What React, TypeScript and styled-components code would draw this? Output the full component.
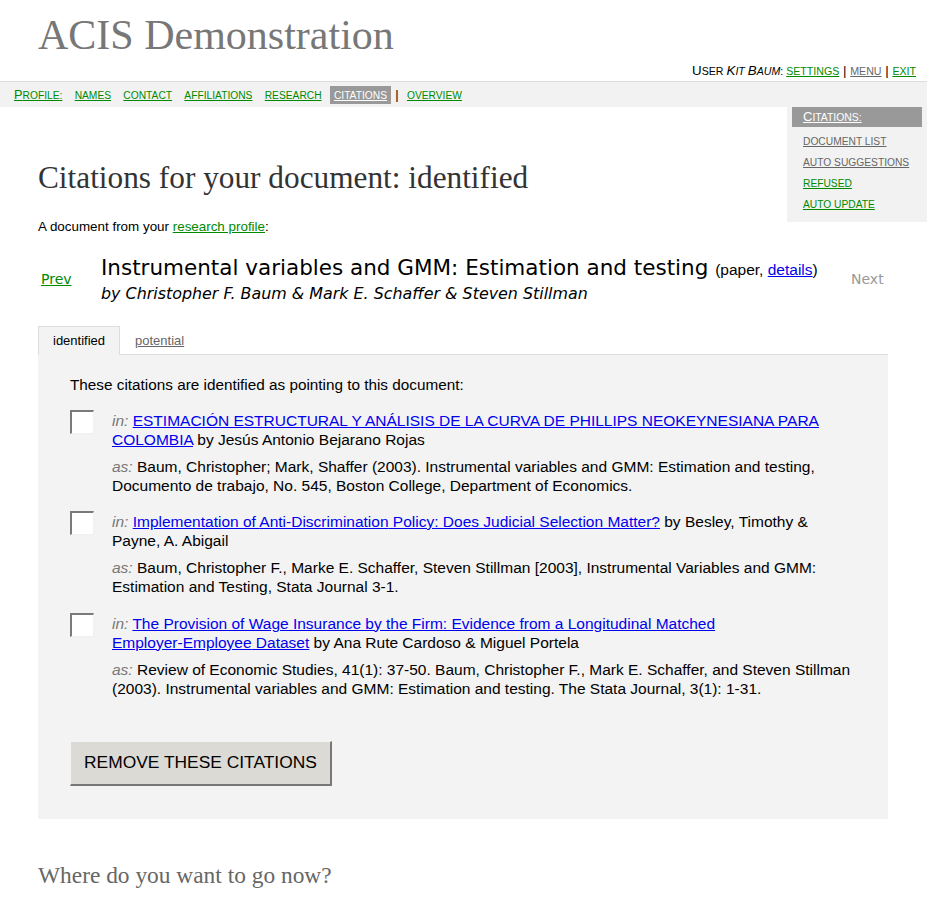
import React from "react";
import styled, { createGlobalStyle } from "styled-components";

const Global = createGlobalStyle`
  html, body { margin: 0; padding: 0; background: #fff; }
  body { font-family: "Liberation Sans", Arial, sans-serif; color: #000; }
`;

const green = "#008a00";

const Small = styled.span`
  font-size: 0.8em;
  line-height: 1;
`;

const NoBreak = styled.span`
  white-space: nowrap;
`;

function SmallCaps({ text }: { text: string }) {
  const parts = text.match(/[A-Z]+|[^A-Z]+/g) || [];
  return (
    <>
      {parts.map((p, i) =>
        /[A-Z]/.test(p[0]) ? <React.Fragment key={i}>{p}</React.Fragment> : <Small key={i}>{p.toUpperCase()}</Small>
      )}
    </>
  );
}

function KeepHyphens({ text }: { text: string }) {
  const parts = text.split(/(\S+-\S+)/);
  return (
    <>
      {parts.map((p, i) => (i % 2 === 1 ? <NoBreak key={i}>{p}</NoBreak> : <React.Fragment key={i}>{p}</React.Fragment>))}
    </>
  );
}

const Page = styled.div`
  width: 927px;
`;

const Header = styled.header`
  padding: 0 11px 0 38px;
`;

const SiteTitle = styled.h1`
  margin: 0;
  padding-top: 12px;
  font-family: "Liberation Serif", serif;
  font-weight: normal;
  font-size: 42px;
  line-height: 46px;
  color: #777;
`;

const UserLine = styled.div`
  text-align: right;
  font-size: 13.3px;
  line-height: 16px;
  margin-top: 4.5px;
  padding-bottom: 2.5px;
  color: #000;
`;

const Link = styled.a<{ $tone?: "green" | "gray" | "blue" | "white" }>`
  color: ${(p) =>
    p.$tone === "gray" ? "#666" : p.$tone === "blue" ? "#0000ee" : p.$tone === "white" ? "#fff" : green};
  text-decoration: underline;
  cursor: pointer;
`;

const NavBar = styled.nav`
  border-top: 1px solid #ddd;
  background: #f2f2f2;
  height: 25px;
  display: flex;
  align-items: center;
  gap: 4.3px;
  padding-left: 10px;
  font-size: 12.8px;
`;

const NavItem = styled.a<{ $active?: boolean }>`
  display: inline-block;
  color: ${(p) => (p.$active ? "#fff" : green)};
  background: ${(p) => (p.$active ? "#999" : "transparent")};
  text-decoration: underline;
  line-height: 14px;
  padding: 2px 4px;
  cursor: pointer;
`;

const NavSep = styled.span`
  color: #000;
  font-size: 13px;
`;

const Main = styled.main`
  padding: 0 39px 0 38px;
`;

const SideBox = styled.aside`
  float: right;
  width: 140px;
  margin-right: -39px;
  background: #f2f2f2;
  padding-bottom: 8.5px;
`;

const SideHead = styled.div`
  margin: 0 5px;
  background: #999;
  height: 20px;
  line-height: 20px;
  padding-left: 11px;
  font-size: 13px;
`;

const SideList = styled.ul`
  list-style: none;
  margin: 0;
  padding: 2.5px 0 0 16px;
`;

const SideItem = styled.li`
  font-size: 12.8px;
  line-height: 21px;
`;

const PageTitle = styled.h2`
  margin: 0;
  padding-top: 53px;
  font-family: "Liberation Serif", serif;
  font-weight: normal;
  font-size: 31.3px;
  line-height: 36px;
  color: #333;
`;

const Intro = styled.p`
  margin: 23px 0 0;
  font-size: 13.4px;
  line-height: 16px;
`;

const DocRow = styled.div`
  display: flex;
  align-items: flex-start;
  margin-top: 20px;
`;

const PrevNext = styled.div<{ $muted?: boolean; $side: "prev" | "next" }>`
  flex: none;
  width: ${(p) => (p.$side === "prev" ? "60px" : "37px")};
  padding-left: ${(p) => (p.$side === "prev" ? "3px" : "0")};
  padding-top: 15px;
  font-family: "DejaVu Sans", sans-serif;
  font-size: 14px;
  line-height: 18px;
  color: ${(p) => (p.$muted ? "#999" : "inherit")};
`;

const DocInfo = styled.div`
  flex: 1;
`;

const DocTitle = styled.div`
  font-family: "DejaVu Sans", sans-serif;
  font-size: 21.5px;
  line-height: 26px;
`;

const DocMeta = styled.span`
  font-family: "Liberation Sans", Arial, sans-serif;
  font-size: 15.5px;
`;

const DocAuthors = styled.div`
  font-family: "DejaVu Sans", sans-serif;
  font-size: 15.9px;
  font-style: italic;
  line-height: 22px;
`;

const Tabs = styled.div`
  display: flex;
  margin-top: 20.5px;
  border-bottom: 1px solid #ddd;
  align-items: flex-end;
`;

const Tab = styled.div<{ $active?: boolean }>`
  box-sizing: border-box;
  padding: 0 14px;
  height: 29px;
  display: flex;
  align-items: center;
  font-size: 13px;
  background: ${(p) => (p.$active ? "#f3f3f3" : "transparent")};
  border: 1px solid ${(p) => (p.$active ? "#ddd" : "transparent")};
  border-bottom: none;
  margin-bottom: -1px;
`;

const Panel = styled.section`
  background: #f3f3f3;
  padding: 20px 32px 33px;
`;

const PanelLead = styled.p`
  margin: 0 0 16px;
  font-size: 15.3px;
  line-height: 20px;
`;

const CiteItem = styled.div`
  display: flex;
  align-items: flex-start;
  gap: 18px;
  margin-bottom: 17.5px;
`;

const Check = styled.span`
  flex: none;
  width: 24px;
  height: 24px;
  margin-top: -1px;
  box-sizing: border-box;
  background: #fff;
  border-top: 2px solid #7a7a7a;
  border-left: 2px solid #7a7a7a;
  border-right: 1px solid #f0f0f0;
  border-bottom: 1px solid #f0f0f0;
`;

const CiteBody = styled.div`
  font-size: 15.5px;
  line-height: 19px;
`;

const CiteLine = styled.p<{ $gap?: boolean }>`
  margin: ${(p) => (p.$gap ? "8px 0 0" : "0")};
`;

const Label = styled.i`
  color: #777;
`;

const RemoveButton = styled.button`
  display: block;
  margin-top: 43px;
  font-family: "Liberation Sans", Arial, sans-serif;
  font-size: 17.4px;
  background: #dcdad5;
  color: #000;
  padding: 0 13px;
  height: 45px;
  border-style: solid;
  border-width: 1px 2px 2px 1px;
  border-color: #f4f4f4 #777 #777 #f4f4f4;
  cursor: pointer;
`;

const Footer = styled.h3`
  margin: 42px 0 0;
  font-family: "Liberation Serif", serif;
  font-weight: normal;
  font-size: 23.4px;
  line-height: 28px;
  color: #666;
`;

const cites = [
  {
    title: "ESTIMACIÓN ESTRUCTURAL Y ANÁLISIS DE LA CURVA DE PHILLIPS NEOKEYNESIANA PARA COLOMBIA",
    by: "Jesús Antonio Bejarano Rojas",
    as: "Baum, Christopher; Mark, Shaffer (2003). Instrumental variables and GMM: Estimation and testing, Documento de trabajo, No. 545, Boston College, Department of Economics.",
  },
  {
    title: "Implementation of Anti-Discrimination Policy: Does Judicial Selection Matter?",
    by: "Besley, Timothy & Payne, A. Abigail",
    as: "Baum, Christopher F., Marke E. Schaffer, Steven Stillman [2003], Instrumental Variables and GMM: Estimation and Testing, Stata Journal 3-1.",
  },
  {
    title: "The Provision of Wage Insurance by the Firm: Evidence from a Longitudinal Matched Employer-Employee Dataset",
    by: "Ana Rute Cardoso & Miguel Portela",
    as: "Review of Economic Studies, 41(1): 37-50. Baum, Christopher F., Mark E. Schaffer, and Steven Stillman (2003). Instrumental variables and GMM: Estimation and testing. The Stata Journal, 3(1): 1-31.",
  },
];

const navItems = ["names", "contact", "affiliations", "research"];
const sideItems: { label: string; tone: "gray" | "green" }[] = [
  { label: "document list", tone: "gray" },
  { label: "auto suggestions", tone: "gray" },
  { label: "refused", tone: "green" },
  { label: "auto update", tone: "green" },
];

export default function App() {
  return (
    <Page>
      <Global />
      <Header>
        <SiteTitle>ACIS Demonstration</SiteTitle>
        <UserLine>
          <SmallCaps text="User " />
          <i>
            <SmallCaps text="Kit Baum" />
          </i>
          <SmallCaps text=": " />
          <Link>
            <SmallCaps text="settings" />
          </Link>{" "}
          |{" "}
          <Link $tone="gray">
            <SmallCaps text="menu" />
          </Link>{" "}
          |{" "}
          <Link>
            <SmallCaps text="exit" />
          </Link>
        </UserLine>
      </Header>
      <NavBar>
        <NavItem>
          <SmallCaps text="Profile:" />
        </NavItem>
        {navItems.map((n) => (
          <NavItem key={n}>
            <SmallCaps text={n} />
          </NavItem>
        ))}
        <NavItem $active>
          <SmallCaps text="citations" />
        </NavItem>
        <NavSep>|</NavSep>
        <NavItem>
          <SmallCaps text="overview" />
        </NavItem>
      </NavBar>
      <Main>
        <SideBox>
          <SideHead>
            <Link $tone="white">
              <SmallCaps text="Citations:" />
            </Link>
          </SideHead>
          <SideList>
            {sideItems.map((s) => (
              <SideItem key={s.label}>
                <Link $tone={s.tone}>
                  <SmallCaps text={s.label} />
                </Link>
              </SideItem>
            ))}
          </SideList>
        </SideBox>
        <PageTitle>Citations for your document: identified</PageTitle>
        <Intro>
          A document from your <Link>research profile</Link>:
        </Intro>
        <DocRow>
          <PrevNext $side="prev">
            <Link>Prev</Link>
          </PrevNext>
          <DocInfo>
            <DocTitle>
              Instrumental variables and GMM: Estimation and testing{" "}
              <DocMeta>
                (paper, <Link $tone="blue">details</Link>)
              </DocMeta>
            </DocTitle>
            <DocAuthors>by Christopher F. Baum &amp; Mark E. Schaffer &amp; Steven Stillman</DocAuthors>
          </DocInfo>
          <PrevNext $side="next" $muted>
            Next
          </PrevNext>
        </DocRow>
        <Tabs>
          <Tab $active>identified</Tab>
          <Tab>
            <Link $tone="gray">potential</Link>
          </Tab>
        </Tabs>
        <Panel>
          <PanelLead>These citations are identified as pointing to this document:</PanelLead>
          {cites.map((c) => (
            <CiteItem key={c.title}>
              <Check />
              <CiteBody>
                <CiteLine>
                  <Label>in:</Label>{" "}
                  <Link $tone="blue">
                    <KeepHyphens text={c.title} />
                  </Link>{" "}
                  by {c.by}
                </CiteLine>
                <CiteLine $gap>
                  <Label>as:</Label> {c.as}
                </CiteLine>
              </CiteBody>
            </CiteItem>
          ))}
          <RemoveButton>REMOVE THESE CITATIONS</RemoveButton>
        </Panel>
        <Footer>Where do you want to go now?</Footer>
      </Main>
    </Page>
  );
}
